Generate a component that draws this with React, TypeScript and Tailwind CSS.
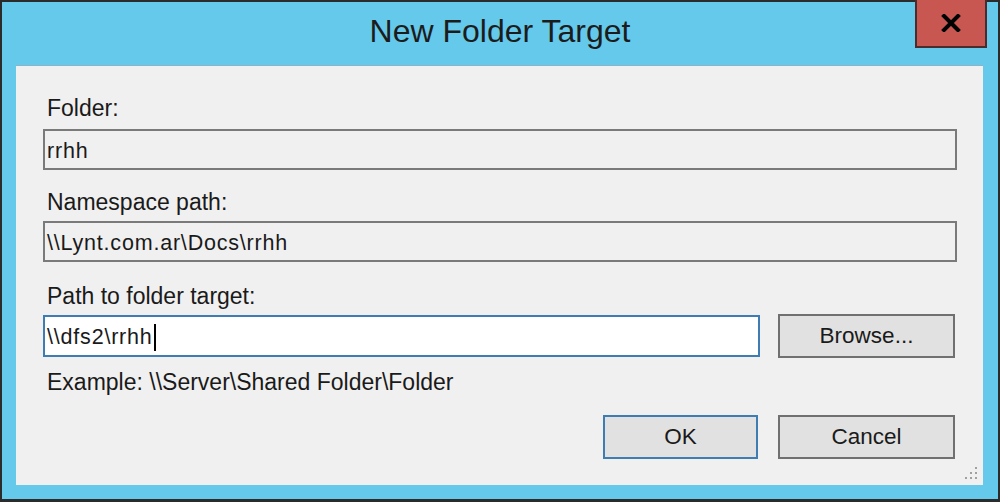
import React from 'react';

const font = { fontFamily: '"Liberation Sans", Arial, sans-serif' };

function Field({ label, value, top, gap }: { label: string; value: string; top: string; gap: string }) {
  return (
    <div className={top}>
      <div className="pl-[4px] text-[23px] leading-[26px] text-[#1a1a1a]">{label}</div>
      <div className={`${gap} flex h-[41px] w-[914px] items-center border-2 border-[#7a7a7a] bg-[#f0f0f0] pl-[2px] pt-[2px] text-[21.5px] leading-[24px] tracking-[0.8px] text-[#1a1a1a]`}>
        {value}
      </div>
    </div>
  );
}

function Grip() {
  const dots = [
    [13, 1],
    [8, 6],
    [13, 6],
    [3, 11],
    [8, 11],
    [13, 11],
  ];
  return (
    <svg className="absolute bottom-[4px] right-[4px]" width="17" height="15" viewBox="0 0 17 15">
      {dots.map(([x, y], i) => (
        <rect key={i} x={x} y={y} width="2" height="2" fill="#a0a0a0" />
      ))}
    </svg>
  );
}

export default function App() {
  return (
    <div style={font} className="flex h-[502px] w-[1000px] flex-col border-2 border-b-[3px] border-[#2b2b2b] bg-[#64c9ea]">
      {/* Title bar */}
      <div className="relative flex h-[63px] shrink-0 items-start justify-center">
        <div className="pt-[11px] text-[32px] leading-[36px] text-[#1c1c1c]">New Folder Target</div>
        <button className="absolute right-[11px] top-[-2px] flex h-[48px] w-[72px] items-center justify-center border-2 border-t-0 border-[#4a2c2c] bg-[#c75750]">
          <svg width="20" height="18" viewBox="0 0 20 18">
            <path d="M3 2 L17 16 M17 2 L3 16" stroke="#000" strokeWidth="4" strokeLinecap="square" />
          </svg>
        </button>
      </div>

      {/* Client area */}
      <div className="relative ml-[14px] mr-[15px] mb-[14px] flex-1 border-t border-[#8fb3c6] bg-[#f0f0f0] pl-[27px]">
        <Field top="mt-[29px]" gap="mt-[8px]" label="Folder:" value="rrhh" />
        <Field top="mt-[19px]" gap="mt-[6px]" label="Namespace path:" value={'\\\\Lynt.com.ar\\Docs\\rrhh'} />

        <div className="mt-[21px]">
          <div className="pl-[4px] text-[23px] leading-[26px] text-[#1a1a1a]">Path to folder target:</div>
          <div className="mt-[5px] flex items-center gap-[18px]">
            <div className="flex h-[42px] w-[717px] items-center border-2 border-[#3d7db3] bg-white pl-[2px] pt-[2px] text-[21.5px] leading-[24px] tracking-[0.8px] text-[#1a1a1a]">
              {'\\\\dfs2\\rrhh'}
              <span className="ml-[1px] inline-block h-[27px] w-[2px] bg-black" />
            </div>
            <button className="h-[44px] w-[177px] border-2 border-[#707070] bg-[#e1e1e1] text-[22.5px] leading-[26px] text-[#1a1a1a]">
              Browse...
            </button>
          </div>
        </div>

        <div className="mt-[11px] pl-[4px] text-[23px] leading-[26px] text-[#1a1a1a]">
          {'Example: \\\\Server\\Shared Folder\\Folder'}
        </div>

        <div className="mt-[20px] flex justify-end gap-[20px] pr-[28px]">
          <button className="h-[44px] w-[155px] border-2 border-[#3d7db3] bg-[#e1e1e1] text-[22.5px] leading-[26px] text-[#1a1a1a]">
            OK
          </button>
          <button className="h-[44px] w-[177px] border-2 border-[#707070] bg-[#e1e1e1] text-[22.5px] leading-[26px] text-[#1a1a1a]">
            Cancel
          </button>
        </div>

        <Grip />
      </div>
    </div>
  );
}
